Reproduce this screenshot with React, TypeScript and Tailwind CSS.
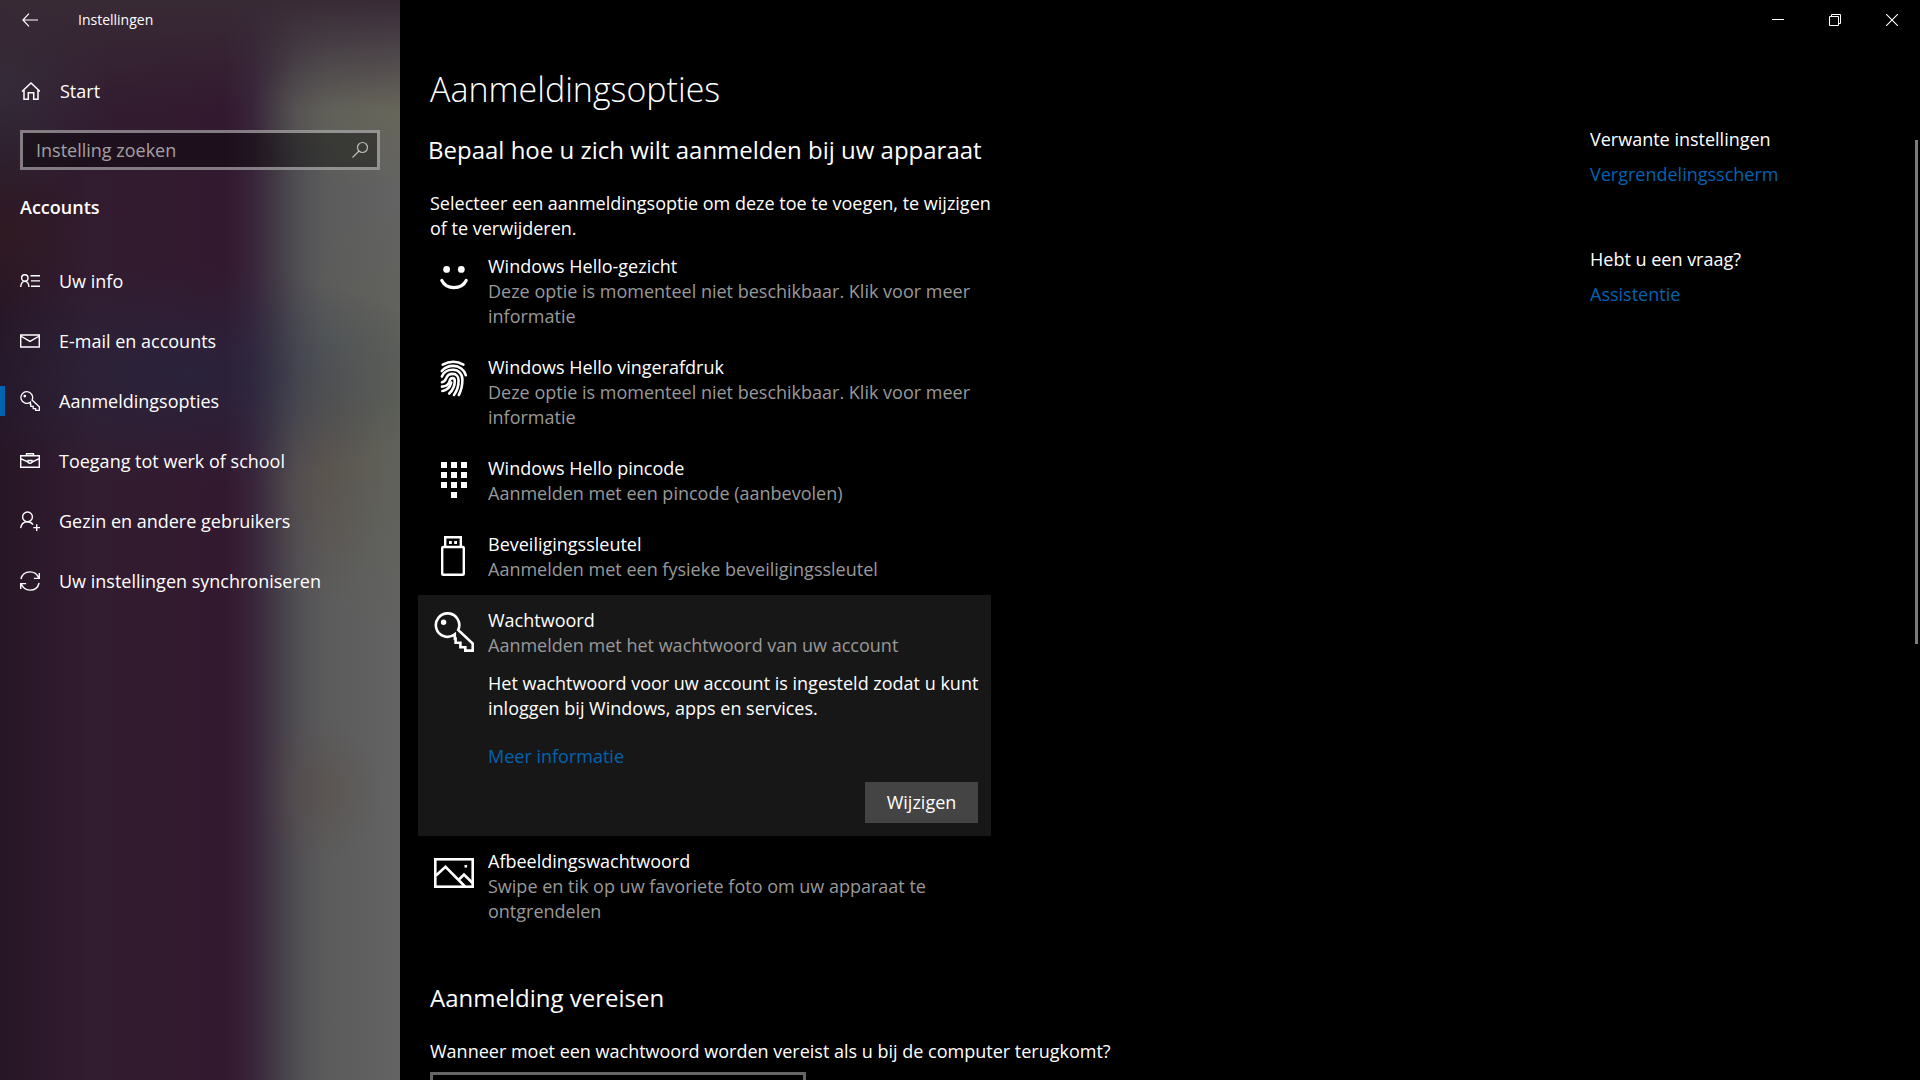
import type { ReactNode } from "react";

type IconProps = { className?: string };

function KeyIcon({ className }: IconProps) {
  return (
    <svg viewBox="0 0 40 40" className={className} fill="none" stroke="currentColor" strokeWidth="2.6" aria-hidden="true">
      <path d="M24.200 18A11.700 11.700 0 1 0 20.800 22.300v4.200h.8v4.300h4.800v4.400h4.900V38.600h7.400v-7z" />
      <circle cx="9.600" cy="10.200" r="2.700" fill="currentColor" stroke="none" />
    </svg>
  );
}

function FaceIcon() {
  return (
    <svg viewBox="0 0 40 40" className="h-10 w-10" aria-hidden="true">
      <circle cx="12.6" cy="11.4" r="3.4" fill="currentColor" />
      <circle cx="27.3" cy="11.4" r="3.4" fill="currentColor" />
      <path d="M7.8 22.500C10.300 27.400 14.800 29.600 20 29.600s9.700-2.200 12.200-7.100" fill="none" stroke="currentColor" strokeWidth="3.2" strokeLinecap="round" />
    </svg>
  );
}

function FingerprintIcon() {
  return (
    <svg viewBox="0 0 40 40" className="h-10 w-10" fill="none" stroke="currentColor" strokeWidth="2.6" strokeLinecap="round" aria-hidden="true">
      <path d="M8.700 5.600C12 3.800 15.600 2.800 19.400 2.800c3.600 0 7 1 10 2.800" />
      <path d="M7.800 12C10.600 8.600 14.800 6.900 19.200 6.900c6 0 11.200 3.600 12.600 9.400" />
      <path d="M7.900 17.600C9.600 13.400 14 10.800 18.800 10.800c5.800 0 9.600 4.200 9.600 9.800 0 5.800-1 10.800-3.600 15.400" />
      <path d="M8 23.200c2.800-.4 3.400-2 4.200-4 1-2.600 3.400-4.300 6.400-4.300 3.700 0 6 2.800 6 6.400 0 5.800-1.600 10.600-4.600 14.700" />
      <path d="M8 27.600c4.400-.2 6.700-2.200 7.500-5.400.5-1.900 1.400-3.100 2.900-3.100 1.700 0 2.400 1.300 2.400 3 0 4.800-2.200 9.400-5.600 12.400" />
      <path d="M8.400 32c4.400-.6 7.400-3.200 8.800-8.400" />
    </svg>
  );
}

function PinIcon() {
  return (
    <svg viewBox="0 0 40 40" className="h-10 w-10" fill="currentColor" aria-hidden="true">
      <path d="M7 2h6v6H7zM17 2h6v6h-6zM27 2h6v6h-6zM7 12h6v6H7zM17 12h6v6h-6zM27 12h6v6h-6zM7 22h6v6H7zM17 22h6v6h-6zM27 22h6v6h-6zM17 32h6v6h-6z" />
    </svg>
  );
}

function UsbIcon() {
  return (
    <svg viewBox="0 0 40 40" className="h-10 w-10" fill="none" stroke="currentColor" strokeWidth="2.4" aria-hidden="true">
      <path d="M11.200 11V1.200h15.600V11" />
      <rect x="8.200" y="11" width="21.600" height="27.800" rx="1" />
      <path d="M15 5h2.800v3H15zM20.200 5H23v3h-2.800z" fill="currentColor" stroke="none" />
    </svg>
  );
}

function PictureIcon() {
  return (
    <svg viewBox="0 0 40 40" className="h-10 w-10" fill="none" stroke="currentColor" strokeWidth="2.6" aria-hidden="true">
      <rect x="1.300" y="6.300" width="37.400" height="27.400" />
      <path d="M2 22.500l9.500-8.700L31 33.500M24.500 27l5.500-5.500 8.500 8.500" />
      <path d="M30.500 12h2.600v2.600h-2.600z" fill="currentColor" stroke="none" />
    </svg>
  );
}

function NavIcon({ children }: { children: ReactNode }) {
  return (
    <svg viewBox="0 0 20 20" className="h-5 w-5" fill="none" stroke="currentColor" strokeWidth="1.4" aria-hidden="true">
      {children}
    </svg>
  );
}

const navItems = [
  {
    label: "Uw info",
    icon: (
      <NavIcon>
        <circle cx="4.800" cy="7" r="3.200" />
        <path d="M.7 16c.3-3.400 2-5.600 4.100-5.600S8.700 12.600 9 16M10.500 4.700H20M11 9.900h9M11 15.200h9" />
      </NavIcon>
    ),
  },
  {
    label: "E-mail en accounts",
    icon: (
      <NavIcon>
        <path d="M.7 4h18.600v12H.7zM.7 5l9.300 5.400L19.300 5" />
      </NavIcon>
    ),
  },
  { label: "Aanmeldingsopties", icon: <KeyIcon className="h-5 w-5" />, active: true },
  {
    label: "Toegang tot werk of school",
    icon: (
      <NavIcon>
        <path d="M.7 4.700h18.600v11.600H.7zM6.500 4.500V2.700h7v1.800M.7 7.600L8 11M19.300 7.600L12 11" />
        <path d="M8 9.500h4v1c0 1-.9 1.700-2 1.700s-2-.7-2-1.700z" />
      </NavIcon>
    ),
  },
  {
    label: "Gezin en andere gebruikers",
    icon: (
      <NavIcon>
        <circle cx="7.500" cy="5.900" r="4.900" />
        <path d="M.7 17.200c.5-3.800 3.100-6.400 6.800-6.400 2.400 0 4.200 1 5.500 2.800M13.300 16.600H20M16.700 13.200V20" />
      </NavIcon>
    ),
  },
  {
    label: "Uw instellingen synchroniseren",
    icon: (
      <NavIcon>
        <path d="M.9 8C1.900 3.900 5.400.9 10 .9c4 0 7.200 2.200 8.700 6M19.300 2v5.400h-5.400M19.100 12c-1 4.100-4.500 7.100-9.100 7.100-4 0-7.200-2.200-8.700-6M.7 18v-5.400h5.400" />
      </NavIcon>
    ),
  },
];

type SignInOption = {
  title: string;
  description: string;
  icon: ReactNode;
  open?: boolean;
};

const options: SignInOption[] = [
  {
    title: "Windows Hello-gezicht",
    description: "Deze optie is momenteel niet beschikbaar. Klik voor meer informatie",
    icon: <FaceIcon />,
  },
  {
    title: "Windows Hello vingerafdruk",
    description: "Deze optie is momenteel niet beschikbaar. Klik voor meer informatie",
    icon: <FingerprintIcon />,
  },
  {
    title: "Windows Hello pincode",
    description: "Aanmelden met een pincode (aanbevolen)",
    icon: <PinIcon />,
  },
  {
    title: "Beveiligingssleutel",
    description: "Aanmelden met een fysieke beveiligingssleutel",
    icon: <UsbIcon />,
  },
  {
    title: "Wachtwoord",
    description: "Aanmelden met het wachtwoord van uw account",
    icon: <KeyIcon className="h-10 w-10" />,
    open: true,
  },
  {
    title: "Afbeeldingswachtwoord",
    description: "Swipe en tik op uw favoriete foto om uw apparaat te ontgrendelen",
    icon: <PictureIcon />,
  },
];

function Sidebar() {
  return (
    <aside className="w-[400px] shrink-0 bg-[image:linear-gradient(180deg,#382a35,#382a3500_110px),radial-gradient(ellipse_150px_80px_at_400px_110px,#6a685399,#6a685300),radial-gradient(ellipse_260px_110px_at_190px_375px,#1f2d4877,#1f2d4800),radial-gradient(ellipse_110px_130px_at_0px_80px,#41404c88,#41404c00),radial-gradient(ellipse_90px_90px_at_0px_230px,#3c1f1f66,#3c1f1f00),radial-gradient(ellipse_60px_130px_at_325px_470px,#5a484066,#5a484000),radial-gradient(ellipse_60px_70px_at_320px_790px,#5a484055,#5a484000),radial-gradient(ellipse_100px_220px_at_390px_420px,#5d5f4f99,#5d5f4f00),linear-gradient(90deg,#271626,#321c30_90px,#33192f_225px,#38243a_252px,#433945_275px,#514e53_297px,#5b5b5b_325px,#636363_400px)]">
      <div className="flex h-10 items-center">
        <button aria-label="Terug" className="flex h-10 w-[60px] items-center justify-center">
          <svg viewBox="0 0 16 14" className="h-[14px] w-4" fill="none" stroke="currentColor" strokeWidth="1.2" aria-hidden="true">
            <path d="M7 .7L.9 7 7 13.300M1 7h15" />
          </svg>
        </button>
        <span className="pl-[18px] text-sm">Instellingen</span>
      </div>

      <a href="#start" className="mt-[27px] flex h-12 items-center gap-5 px-5">
        <svg viewBox="0 0 20 20" className="h-5 w-5" fill="none" stroke="currentColor" strokeWidth="1.5" aria-hidden="true">
          <path d="M2 10.500L11 2l9 8.500M4 9v9.300h4.300v-6.500h5.400v6.500H18V9" />
        </svg>
        Start
      </a>

      <div className="mx-5 mt-[15px] flex h-10 items-center border-[3px] border-white/45 bg-black/40 pr-2 pl-[13px]">
        <input
          type="search"
          aria-label="Instelling zoeken"
          placeholder="Instelling zoeken"
          className="min-w-0 flex-1 bg-transparent outline-none placeholder:text-white/60"
        />
        <svg viewBox="0 0 18 18" className="h-[18px] w-[18px] text-white/65" fill="none" stroke="currentColor" strokeWidth="1.2" aria-hidden="true">
          <circle cx="11.500" cy="6.500" r="5" />
          <path d="M8 10L1.500 16.500" />
        </svg>
      </div>

      <h2 className="px-5 pt-[25px] font-semibold">Accounts</h2>

      <nav className="mt-[31px]">
        {navItems.map((item) => (
          <a
            key={item.label}
            href="#"
            aria-current={item.active ? "page" : undefined}
            className="flex h-[60px] items-center"
          >
            <span className={item.active ? "h-[30px] w-[5px] bg-[#0063b1]" : "w-[5px]"} />
            <span className="mr-[19px] ml-[15px]">{item.icon}</span>
            {item.label}
          </a>
        ))}
      </nav>
    </aside>
  );
}

function WindowControls() {
  return (
    <div className="flex h-10 justify-end">
      <button aria-label="Minimaliseren" className="flex w-[57px] items-center justify-center">
        <svg viewBox="0 0 12 12" className="h-3 w-3" stroke="currentColor" aria-hidden="true">
          <path d="M0 5.500h12" />
        </svg>
      </button>
      <button aria-label="Verkleinen" className="flex w-[57px] items-center justify-center">
        <svg viewBox="0 0 12 12" className="h-3 w-3" fill="none" stroke="currentColor" aria-hidden="true">
          <path d="M.5 2.500h9v9h-9zM2.500 2.500v-2h9v9h-2" />
        </svg>
      </button>
      <button aria-label="Sluiten" className="flex w-[57px] items-center justify-center">
        <svg viewBox="0 0 12 12" className="h-3 w-3" stroke="currentColor" strokeWidth="1.1" aria-hidden="true">
          <path d="M0 0l12 12M12 0L0 12" />
        </svg>
      </button>
    </div>
  );
}

function OptionRow({ option }: { option: SignInOption }) {
  return (
    <li className={option.open ? "flex gap-[14px] bg-[#171717] px-4 py-[13px]" : "flex gap-[14px] px-4 py-[13px]"}>
      <span className="mt-1 shrink-0">{option.icon}</span>
      <div className="flex-1">
        <h3>{option.title}</h3>
        <p className="text-[#999]">{option.description}</p>
        {option.open && (
          <>
            <p className="-mr-2 pt-[13px]">
              Het wachtwoord voor uw account is ingesteld zodat u kunt inloggen bij Windows, apps en services.
            </p>
            <a href="#meer" className="mt-[23px] block text-[#0063b1]">
              Meer informatie
            </a>
            <div className="-mr-[3px] mt-[13px] flex justify-end">
              <button className="h-[41px] w-[113px] bg-[#444]">Wijzigen</button>
            </div>
          </>
        )}
      </div>
    </li>
  );
}

export default function App() {
  return (
    <div className="flex h-screen overflow-hidden bg-black font-['Open_Sans',sans-serif] text-lg leading-[25px] text-white">
      <Sidebar />

      <main className="relative min-w-0 flex-1">
        <WindowControls />
        <h1 className="pt-[25px] pl-[30px] text-[34px] leading-[48px] font-light">Aanmeldingsopties</h1>

        <div className="flex justify-between pt-[14px]">
          <div className="pt-[5px] pl-[18px]">
            <section>
              <h2 className="pl-[10px] text-2xl leading-9">Bepaal hoe u zich wilt aanmelden bij uw apparaat</h2>
              <p className="mt-[23px] w-[573px] pl-3">
                Selecteer een aanmeldingsoptie om deze toe te voegen, te wijzigen of te verwijderen.
              </p>
              <ul className="w-[573px]">
                {options.map((option) => (
                  <OptionRow key={option.title} option={option} />
                ))}
              </ul>
            </section>

            <section className="mt-[43px] pl-3">
              <h2 className="text-2xl leading-9">Aanmelding vereisen</h2>
              <label htmlFor="vereisen" className="mt-[23px] block">
                Wanneer moet een wachtwoord worden vereist als u bij de computer terugkomt?
              </label>
              <select id="vereisen" className="mt-2 h-10 w-[376px] appearance-none border-[3px] border-[#666] bg-black px-3">
                <option>Nooit</option>
              </select>
            </section>
          </div>

          <aside className="w-[330px] shrink-0">
            <h2>Verwante instellingen</h2>
            <a href="#vergrendelingsscherm" className="mt-[10px] block text-[#0063b1]">
              Vergrendelingsscherm
            </a>
            <h2 className="mt-[60px]">Hebt u een vraag?</h2>
            <a href="#assistentie" className="mt-[10px] block text-[#0063b1]">
              Assistentie
            </a>
          </aside>
        </div>

        {/* scroll thumb */}
        <div className="absolute top-[140px] right-[2px] h-[504px] w-[3px] bg-[#7a7a7a]" />
      </main>
    </div>
  );
}
